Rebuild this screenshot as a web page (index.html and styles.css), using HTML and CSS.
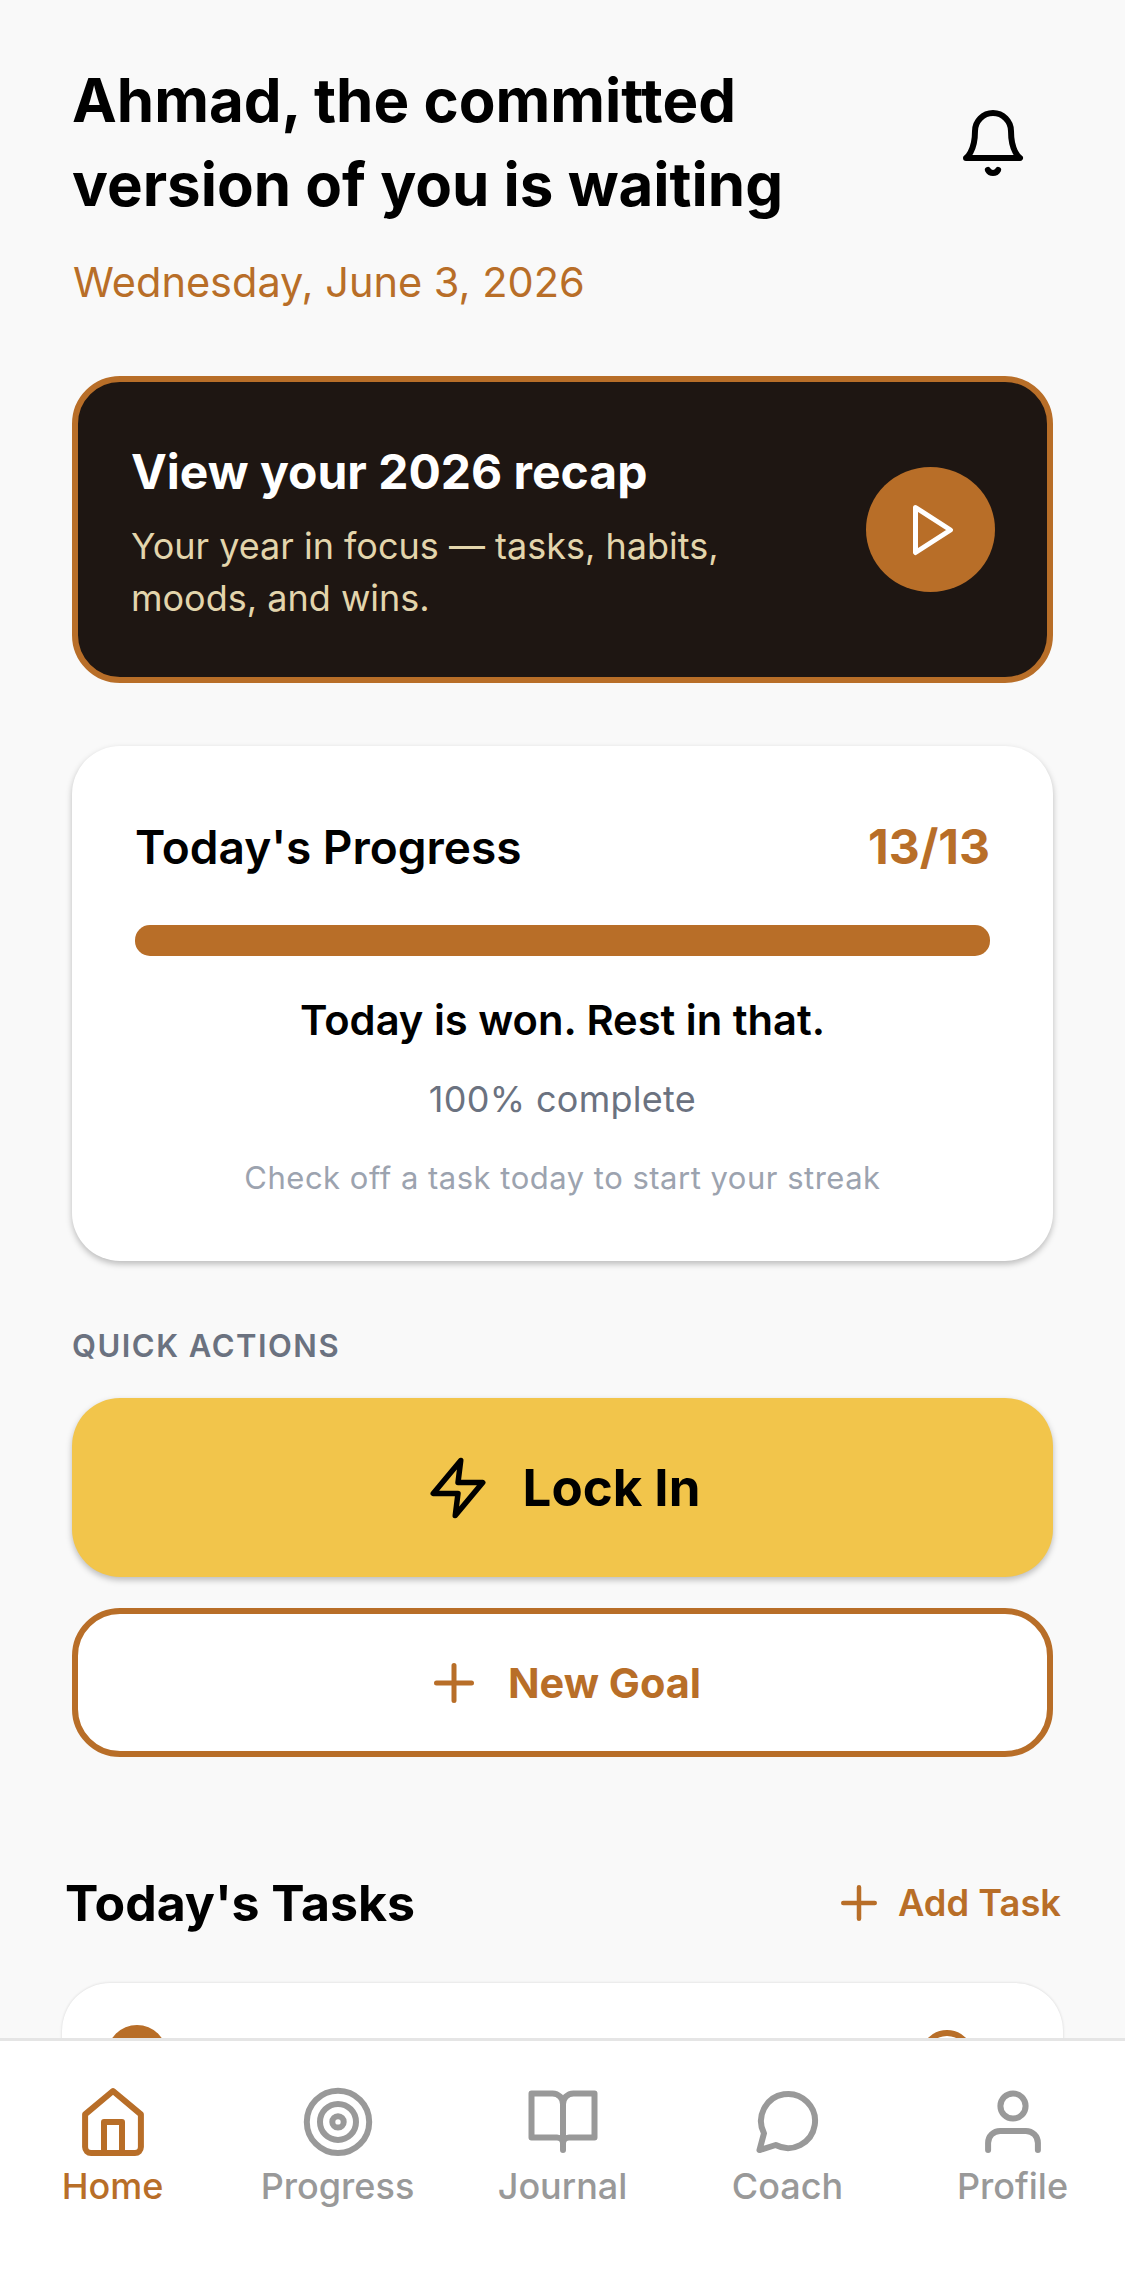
FILE: index.html
```html
<!DOCTYPE html>
<html lang="en">
<head>
<meta charset="utf-8">
<title>Home</title>
<link rel="stylesheet" href="styles.css">
</head>
<body>
<div class="screen">
  <main class="content">
    <header class="header">
      <div class="header-text">
        <h1 class="title">Ahmad, the committed version of you is waiting</h1>
        <p class="date">Wednesday, June 3, 2026</p>
      </div>
      <svg class="icon bell" viewBox="0 0 24 24"><path d="M6 8a6 6 0 0 1 12 0c0 7 3 9 3 9H3s3-2 3-9"/><path d="M10.3 21a1.94 1.94 0 0 0 3.4 0"/></svg>
    </header>

    <section class="recap">
      <div class="recap-text">
        <h2 class="recap-title">View your 2026 recap</h2>
        <p class="recap-sub">Your year in focus — tasks, habits, moods, and wins.</p>
      </div>
      <div class="play"><svg class="icon play-icon" viewBox="0 0 24 24"><path d="M5 3l14 9-14 9V3z"/></svg></div>
    </section>

    <section class="progress-card">
      <div class="progress-head">
        <h2 class="progress-title">Today's Progress</h2>
        <span class="progress-count">13/13</span>
      </div>
      <div class="bar"></div>
      <p class="won">Today is won. Rest in that.</p>
      <p class="percent">100% complete</p>
      <p class="streak">Check off a task today to start your streak</p>
    </section>

    <h3 class="section-label">QUICK ACTIONS</h3>
    <div class="btn-lock">
      <svg class="icon zap" viewBox="0 0 24 24"><path d="M13 2 3 14h9l-1 8 10-12h-9l1-8z"/></svg>
      <span>Lock In</span>
    </div>
    <div class="btn-goal">
      <svg class="icon plus" viewBox="0 0 24 24"><path d="M12 5v14M5 12h14"/></svg>
      <span>New Goal</span>
    </div>

    <div class="tasks-head">
      <h2 class="tasks-title">Today's Tasks</h2>
      <div class="add-task">
        <svg class="icon plus-small" viewBox="0 0 24 24"><path d="M12 5v14M5 12h14"/></svg>
        <span>Add Task</span>
      </div>
    </div>
    <section class="task-card">
      <span class="task-dot"></span>
      <span class="task-ring"></span>
    </section>
  </main>

  <nav class="nav">
    <div class="nav-item active">
      <svg class="icon nav-icon" viewBox="0 0 24 24"><path d="M2.700 9.800 12 2l9.300 7.800v10.900a2 2 0 0 1-2 2H4.700a2 2 0 0 1-2-2z"/><path d="M9 22.700V12.300h6v10.400"/></svg>
      <span>Home</span>
    </div>
    <div class="nav-item">
      <svg class="icon nav-icon" viewBox="0 0 24 24"><circle cx="12" cy="12.300" r="10.400"/><circle cx="12" cy="12.300" r="6"/><circle cx="12" cy="12.300" r="1.900"/></svg>
      <span>Progress</span>
    </div>
    <div class="nav-item">
      <svg class="icon nav-icon" viewBox="0 0 24 24"><path d="M12 21.700V6.500A3.500 3.500 0 0 0 8.500 2.800H1.500v14.700h8.500a2 2 0 0 1 2 2"/><path d="M12 6.500a3.500 3.500 0 0 1 3.500-3.700h7v14.700H14a2 2 0 0 0-2 2"/></svg>
      <span>Journal</span>
    </div>
    <div class="nav-item">
      <svg class="icon nav-icon" viewBox="0 0 24 24"><path d="M7.900 20A9 9 0 1 0 4 16.100L2.500 21.700z"/></svg>
      <span>Coach</span>
    </div>
    <div class="nav-item">
      <svg class="icon nav-icon" viewBox="0 0 24 24"><path d="M20.300 21.700v-2.400a4 4 0 0 0-4-4H7.700a4 4 0 0 0-4 4v2.400"/><circle cx="12" cy="7" r="4.200"/></svg>
      <span>Profile</span>
    </div>
  </nav>
</div>
</body>
</html>
```
FILE: styles.css
```css
* { box-sizing: border-box; margin: 0; padding: 0; }
html, body { width: 1125px; height: 2274px; overflow: hidden; }
body { font-family: Inter, "Liberation Sans", sans-serif; background: #f9f9f9; color: #000; }
.screen { position: relative; width: 1125px; height: 2274px; overflow: hidden; }
.content { padding: 58px 72px 0; display: flex; flex-direction: column; }
.icon { fill: none; stroke: currentColor; stroke-width: 2; stroke-linecap: round; stroke-linejoin: round; flex: none; display: block; }

.header { display: flex; justify-content: space-between; align-items: flex-start; }
.header-text { width: 780px; }
.title { font-size: 60px; line-height: 84px; font-weight: 700; }
.date { font-size: 41.500px; line-height: 56px; color: #b86e28; margin-top: 28px; padding-left: 1px; }
.bell { width: 72px; height: 72px; margin: 49px 24px 0 0; }

.recap { margin-top: 66px; height: 307px; border: 6px solid #b86e28; border-radius: 48px; background: #1e1612; display: flex; align-items: center; justify-content: space-between; padding: 0 52px 0 53px; }
.recap-text { width: 640px; padding-top: 7px; }
.recap-title { font-size: 48px; line-height: 60px; font-weight: 700; color: #fff; }
.recap-sub { font-size: 36px; line-height: 52px; color: #e3d5ac; margin-top: 18px; }
.play { width: 129px; height: 125px; border-radius: 50%; background: #b86e28; color: #fff; display: flex; align-items: center; justify-content: center; }
.play-icon { width: 60px; height: 60px; margin-left: 5px; }

.progress-card { margin-top: 63px; height: 515px; background: #fff; border-radius: 48px; box-shadow: 0 3px 6px rgba(0,0,0,.25); padding: 73px 63px 0; display: flex; flex-direction: column; align-items: center; }
.progress-head { width: 100%; display: flex; justify-content: space-between; align-items: center; }
.progress-title { font-size: 46px; line-height: 56px; font-weight: 600; }
.progress-count { font-size: 48px; line-height: 56px; font-weight: 700; color: #b86e28; }
.bar { width: 100%; height: 31px; border-radius: 15px; background: #b86e28; margin-top: 50px; }
.won { font-size: 41.700px; line-height: 56px; font-weight: 600; margin-top: 36px; }
.percent { font-size: 36px; line-height: 48px; letter-spacing: .3px; color: #6b7280; margin-top: 27px; }
.streak { font-size: 31px; line-height: 44px; letter-spacing: .5px; color: #9ca3af; margin-top: 33px; }

.section-label { font-size: 31px; line-height: 40px; font-weight: 600; letter-spacing: 1.500px; color: #6b7280; margin-top: 65px; }
.btn-lock { margin-top: 32px; height: 179px; border-radius: 48px; background: #f2c54b; box-shadow: 0 3px 6px rgba(0,0,0,.25); display: flex; align-items: center; justify-content: center; gap: 32px; font-size: 51px; font-weight: 700; }
.zap { width: 66px; height: 66px; }
.btn-goal { margin-top: 31px; height: 149px; border: 6px solid #b86e28; border-radius: 48px; background: #fff; color: #b86e28; display: flex; align-items: center; justify-content: center; gap: 24px; font-size: 41.500px; font-weight: 700; }
.plus { width: 60px; height: 60px; }

.tasks-head { margin: 114px -8px 0 -7px; display: flex; justify-content: space-between; align-items: center; }
.tasks-title { font-size: 50px; line-height: 64px; font-weight: 700; }
.add-task { display: flex; align-items: center; gap: 12px; color: #b86e28; font-size: 36.300px; font-weight: 600; }
.plus-small { width: 54px; height: 54px; }

.task-card { margin: 48px -10px 0; height: 160px; background: #fff; border-radius: 48px; box-shadow: 0 0 3px rgba(0,0,0,.15); display: flex; justify-content: space-between; align-items: flex-start; padding: 42px 89px 0 45px; }
.task-dot { width: 60px; height: 60px; border-radius: 50%; background: #b86e28; }
.task-ring { width: 54px; height: 54px; border-radius: 50%; border: 6px solid #b86e28; margin-top: 5px; }

.nav { position: absolute; left: 0; right: 0; bottom: 0; height: 236px; background: #fff; border-top: 3px solid #e5e5e5; display: grid; grid-template-columns: repeat(5, 1fr); padding-top: 44px; align-items: start; }
.nav-item { display: flex; flex-direction: column; align-items: center; gap: 7px; color: #999; font-size: 36px; line-height: 44px; font-weight: 500; }
.nav-item.active { color: #b86e28; }
.nav-icon { width: 72px; height: 72px; }
```
